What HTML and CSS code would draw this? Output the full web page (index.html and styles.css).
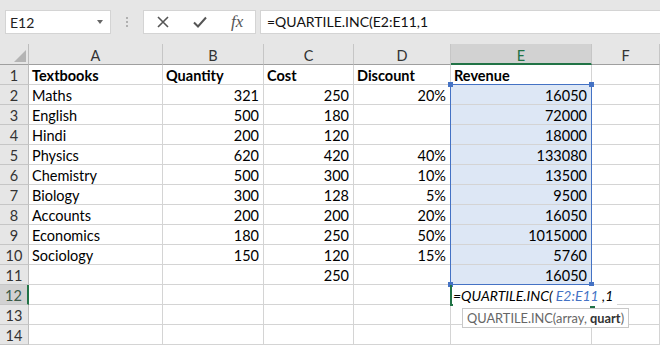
FILE: index.html
```html
<!DOCTYPE html>
<html lang="en">
<head>
    <meta charset="UTF-8">
    <title>QUARTILE.INC</title>
    <link rel="stylesheet" href="styles.css">
</head>
<body>
    <div class="toolbar">
        <div class="namebox">
            <span>E12</span>
            <span class="caret"></span>
        </div>
        <div class="grip"><i></i><i></i><i></i></div>
        <div class="fxbox">
            <svg width="14" height="14" viewBox="0 0 14 14"><path d="M2 2 L12 12 M12 2 L2 12" stroke="#555" stroke-width="1.6" fill="none"/></svg>
            <svg width="16" height="14" viewBox="0 0 16 14"><path d="M2 7.5 L6 11.5 L14 2.5" stroke="#555" stroke-width="2" fill="none"/></svg>
            <span class="fx">fx</span>
        </div>
        <div class="formula">=QUARTILE.INC(E2:E11,1</div>
    </div>

    <div class="sheet">
        <div class="corner"><span></span></div>
        <div class="ch">A</div>
        <div class="ch">B</div>
        <div class="ch">C</div>
        <div class="ch">D</div>
        <div class="ch active">E</div>
        <div class="ch">F</div>

        <div class="rh">1</div><div class="c b">Textbooks</div><div class="c b">Quantity</div><div class="c b">Cost</div><div class="c b">Discount</div><div class="c b">Revenue</div><div class="c"></div>
        <div class="rh">2</div><div class="c">Maths</div><div class="c n">321</div><div class="c n">250</div><div class="c n">20%</div><div class="c n sel">16050</div><div class="c"></div>
        <div class="rh">3</div><div class="c">English</div><div class="c n">500</div><div class="c n">180</div><div class="c n"></div><div class="c n sel">72000</div><div class="c"></div>
        <div class="rh">4</div><div class="c">Hindi</div><div class="c n">200</div><div class="c n">120</div><div class="c n"></div><div class="c n sel">18000</div><div class="c"></div>
        <div class="rh">5</div><div class="c">Physics</div><div class="c n">620</div><div class="c n">420</div><div class="c n">40%</div><div class="c n sel">133080</div><div class="c"></div>
        <div class="rh">6</div><div class="c">Chemistry</div><div class="c n">500</div><div class="c n">300</div><div class="c n">10%</div><div class="c n sel">13500</div><div class="c"></div>
        <div class="rh">7</div><div class="c">Biology</div><div class="c n">300</div><div class="c n">128</div><div class="c n">5%</div><div class="c n sel">9500</div><div class="c"></div>
        <div class="rh">8</div><div class="c">Accounts</div><div class="c n">200</div><div class="c n">200</div><div class="c n">20%</div><div class="c n sel">16050</div><div class="c"></div>
        <div class="rh">9</div><div class="c">Economics</div><div class="c n">180</div><div class="c n">250</div><div class="c n">50%</div><div class="c n sel">1015000</div><div class="c"></div>
        <div class="rh">10</div><div class="c">Sociology</div><div class="c n">150</div><div class="c n">120</div><div class="c n">15%</div><div class="c n sel">5760</div><div class="c"></div>
        <div class="rh">11</div><div class="c"></div><div class="c n"></div><div class="c n">250</div><div class="c n"></div><div class="c n sel">16050</div><div class="c"></div>
        <div class="rh active">12</div><div class="c"></div><div class="c"></div><div class="c"></div><div class="c"></div><div class="c"></div><div class="c"></div>
        <div class="rh">13</div><div class="c"></div><div class="c"></div><div class="c"></div><div class="c"></div><div class="c"></div><div class="c"></div>
        <div class="rh">14</div><div class="c"></div><div class="c"></div><div class="c"></div><div class="c"></div><div class="c"></div><div class="c"></div>

        <!-- overlays -->
        <div class="range">
            <span class="h tl"></span><span class="h tr"></span><span class="h bl"></span><span class="h br"></span>
        </div>
        <div class="editcell">
            <span class="h ebr"></span>
        </div>
        <div class="edittext">=QUARTILE.INC( <span class="ref">E2:E11</span> ,1</div>
        <div class="tip">QUARTILE.INC(array, <b>quart</b>)</div>
    </div>
</body>
</html>
```

FILE: styles.css
```css
body {
    margin: 0;
    width: 660px;
    height: 346px;
    overflow: hidden;
    background: #ffffff;
    font-family: 'Lato', 'Liberation Sans', sans-serif;
    color: #000;
}
.toolbar {
    height: 44px;
    background: #e6e6e6;
    display: flex;
    align-items: flex-start;
    padding-top: 10px;
    box-sizing: border-box;
}
.namebox {
    margin-left: 5px;
    width: 106px;
    height: 24px;
    background: #fff;
    border: 1px solid #d4d4d4;
    box-sizing: border-box;
    display: flex;
    align-items: center;
    justify-content: space-between;
    padding: 0 7px 0 4px;
    font-size: 14px;
    color: #222;
}
.caret {
    width: 0;
    height: 0;
    border-left: 3px solid transparent;
    border-right: 3px solid transparent;
    border-top: 4px solid #666;
}
.grip {
    width: 32px;
    height: 24px;
    display: flex;
    flex-direction: column;
    align-items: center;
    justify-content: center;
    gap: 2px;
}
.grip i {
    width: 2px;
    height: 2px;
    background: #b0b0b0;
}
.fxbox {
    width: 113px;
    height: 24px;
    background: #fff;
    border: 1px solid #d4d4d4;
    box-sizing: border-box;
    display: flex;
    align-items: center;
    padding-left: 12px;
    gap: 22px;
}
.fx {
    font-family: 'Liberation Serif', serif;
    font-style: italic;
    font-size: 17px;
    color: #555;
    margin-left: 1px;
}
.formula {
    margin-left: 4px;
    flex: 1;
    height: 24px;
    background: #fff;
    border: 1px solid #d4d4d4;
    border-right: none;
    box-sizing: border-box;
    font-size: 14px;
    line-height: 22px;
    padding-left: 6px;
    color: #111;
}
.sheet {
    position: relative;
    display: grid;
    grid-template-columns: 29px 134px 101px 90px 97px 141px 68px;
    grid-template-rows: 21px repeat(14, 20px);
    font-size: 14.5px;
}
.corner {
    background: #e6e6e6;
    border-right: 1px solid #bdbdbd;
    border-bottom: 1px solid #9f9f9f;
    position: relative;
}
.corner span {
    position: absolute;
    right: 2px;
    bottom: 2px;
    width: 0;
    height: 0;
    border-left: 12px solid transparent;
    border-bottom: 12px solid #b4b4b4;
}
.ch {
    background: #e6e6e6;
    border-right: 1px solid #c6c6c6;
    border-bottom: 1px solid #9f9f9f;
    text-align: center;
    line-height: 23px;
    overflow: hidden;
    color: #333;
}
.ch.active {
    background: #d2d2d2;
    color: #217346;
    border-bottom: 2px solid #217346;
}
.rh {
    background: #e6e6e6;
    border-right: 1px solid #bdbdbd;
    border-bottom: 1px solid #c6c6c6;
    text-align: center;
    line-height: 22px;
    overflow: hidden;
    color: #333;
    box-sizing: border-box;
}
.rh.active {
    background: #d2d2d2;
    border-right: 2px solid #217346;
    color: #3c5a48;
}
.c {
    border-right: 1px solid #d4d4d4;
    border-bottom: 1px solid #d4d4d4;
    line-height: 22px;
    padding: 0 4px 0 3px;
    white-space: nowrap;
    overflow: hidden;
    box-sizing: border-box;
}
.c.b {
    font-weight: bold;
}
.c.n {
    text-align: right;
}
.c.sel {
    background: #dde7f5;
}
.range {
    position: absolute;
    left: 450px;
    top: 40px;
    width: 142px;
    height: 201px;
    border: 1px solid #4472c4;
    box-sizing: border-box;
}
.h {
    position: absolute;
    width: 5px;
    height: 5px;
    background: #4472c4;
}
.tl { left: -3px; top: -3px; }
.tr { right: -3px; top: -3px; }
.bl { left: -3px; bottom: -3px; }
.br { right: -3px; bottom: -3px; }
.editcell {
    position: absolute;
    left: 450px;
    top: 241px;
    width: 142px;
    height: 21px;
    border-left: 2px solid #217346;
    border-bottom: 2px solid #217346;
    box-sizing: border-box;
}
.ebr {
    right: -3px;
    bottom: -4px;
    background: #217346;
}
.edittext {
    position: absolute;
    left: 453px;
    top: 242px;
    line-height: 20px;
    font-style: italic;
    font-size: 14px;
    white-space: nowrap;
    background: #fff;
    padding-right: 4px;
}
.edittext .ref {
    color: #4472c4;
}
.tip {
    position: absolute;
    left: 462px;
    top: 264px;
    width: 167px;
    height: 20px;
    box-sizing: border-box;
    background: #fff;
    border: 1px solid #c8c8c8;
    font-size: 12.8px;
    line-height: 18px;
    padding-left: 4px;
    color: #666;
    white-space: nowrap;
    overflow: hidden;
}
.tip b {
    color: #333;
}
```
